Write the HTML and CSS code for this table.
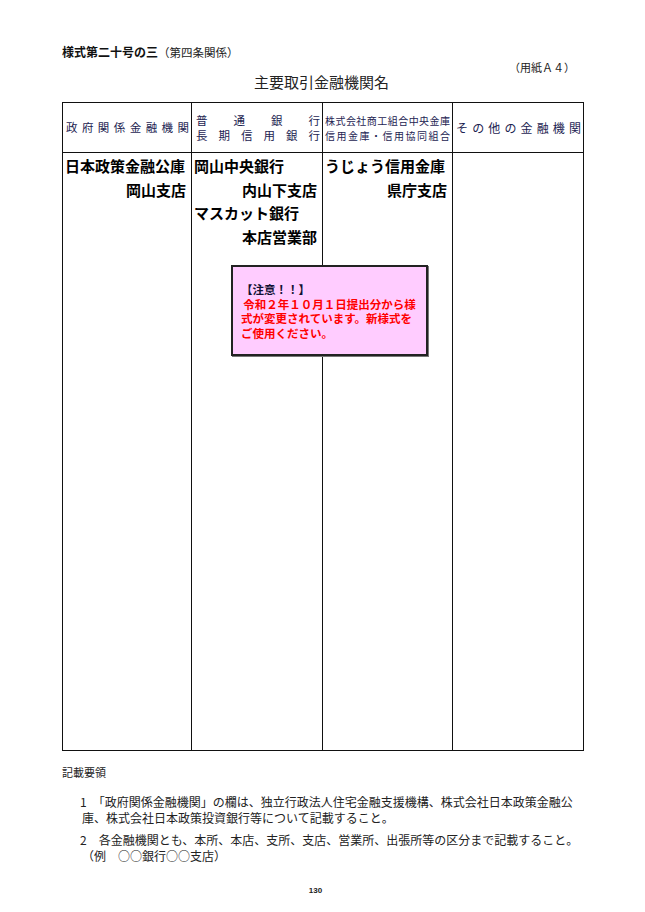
FILE: index.html
```html
<!DOCTYPE html>
<html lang="ja">
<head>
<meta charset="utf-8">
<title>主要取引金融機関名</title>
<link rel="stylesheet" href="styles.css">
</head>
<body>
<div class="page">
  <div class="form-no"><b>様式第二十号の三</b><span class="rel">（第四条関係）</span></div>
  <div class="paper">（用紙Ａ４）</div>
  <h1 class="title">主要取引金融機関名</h1>

  <div class="table-wrap">
    <table class="grid">
      <colgroup>
        <col class="c1"><col class="c2"><col class="c3"><col class="c4">
      </colgroup>
      <thead>
        <tr class="head">
          <th><div class="dist h1">政府関係金融機関</div></th>
          <th><div class="dist h2">普通銀行</div><div class="dist h2">長期信用銀行</div></th>
          <th><div class="dist h3">株式会社商工組合中央金庫</div><div class="dist h3">信用金庫・信用協同組合</div></th>
          <th><div class="dist h4">その他の金融機関</div></th>
        </tr>
      </thead>
      <tbody>
        <tr class="body">
          <td><div>日本政策金融公庫</div><div class="r">岡山支店</div></td>
          <td><div>岡山中央銀行</div><div class="r">内山下支店</div><div>マスカット銀行</div><div class="r">本店営業部</div></td>
          <td><div>うじょう信用金庫</div><div class="r">県庁支店</div></td>
          <td></td>
        </tr>
      </tbody>
    </table>
    <div class="notice">
      <div class="notice-head">【注意！！】</div>
      <div class="notice-text">&#x2009;令和２年１０月１日提出分から様<br>式が変更されています。新様式を<br>ご使用ください。</div>
    </div>
  </div>

  <div class="notes">
    <div class="notes-title">記載要領</div>
    <p class="item">1　「政府関係金融機関」の欄は、独立行政法人住宅金融支援機構、株式会社日本政策金融公庫、株式会社日本政策投資銀行等について記載すること。</p>
    <p class="item">2　各金融機関とも、本所、本店、支所、支店、営業所、出張所等の区分まで記載すること。<br>（例　○○銀行○○支店）</p>
  </div>

  <div class="pageno">130</div>
</div>
</body>
</html>
```

FILE: styles.css
```css
html, body {
  margin: 0;
  padding: 0;
  background: #fff;
}
body {
  font-family: "Noto Sans CJK JP", "Noto Sans", sans-serif;
  color: #111;
}
.page {
  width: 645px;
  padding: 44px 0 0 62px;
  box-sizing: border-box;
}
.form-no {
  font-size: 12px;
  line-height: 16px;
  height: 16px;
}
.form-no b {
  font-weight: 700;
}
.form-no .rel {
  font-size: 11.5px;
  font-weight: 400;
  color: #222;
}
.paper {
  font-size: 11px;
  line-height: 14px;
  margin: 0 0 0 447px;
  color: #222;
}
.title {
  margin: -2px 0 0 192px;
  font-size: 15px;
  line-height: 20px;
  font-weight: 400;
  color: #222;
}
.table-wrap {
  position: relative;
  width: 521px;
  margin-top: 10px;
}
.grid {
  width: 521px;
  table-layout: fixed;
  border-collapse: collapse;
}
.grid col.c1 { width: 129px; }
.grid col.c2 { width: 131px; }
.grid col.c3 { width: 130px; }
.grid col.c4 { width: 131px; }
.grid th, .grid td {
  border: 1px solid #111;
  padding: 0;
}
.head th {
  height: 49px;
  font-weight: 400;
  color: #1d2452;
  vertical-align: middle;
}
.dist {
  text-align: justify;
  text-align-last: justify;
  white-space: nowrap;
}
.h1 { font-size: 11.5px; line-height: 15px; padding: 0 2px 0 3px; }
.h2 { font-size: 11.5px; line-height: 15px; padding: 0 2px 0 4px; }
.h3 { font-size: 10px; line-height: 15px; padding: 0 2px 0 2px; }
.h4 { font-size: 12px; line-height: 15px; padding: 0 2px 0 3px; }
.body td {
  height: 596px;
  vertical-align: top;
  font-size: 15px;
  line-height: 23.6px;
  font-weight: 700;
  color: #000;
  padding: 1px 5px 0 2px;
}
.body td .r {
  text-align: right;
}
.notice {
  position: absolute;
  left: 169px;
  top: 163px;
  width: 197px;
  height: 91px;
  background: #ffccff;
  border: 2px solid #222;
  box-shadow: 1px 1px 0 #777;
  padding: 15px 0 0 8px;
  box-sizing: border-box;
  font-size: 11.5px;
  line-height: 14.7px;
  font-weight: 700;
}
.notice-head {
  color: #111133;
}
.notice-text {
  color: #ff0000;
  white-space: nowrap;
}
.notes {
  margin-top: 13px;
  width: 521px;
  color: #222;
}
.notes-title {
  font-size: 11px;
  line-height: 16px;
  margin-bottom: 14px;
}
.item {
  margin: 0 0 6px 0;
  padding-left: 20px;
  text-indent: -2px;
  font-size: 12px;
  line-height: 16px;
}
.pageno {
  margin-top: 22px;
  width: 521px;
  padding-right: 14px;
  box-sizing: border-box;
  text-align: center;
  font-family: "Liberation Sans", Arial, sans-serif;
  font-size: 8px;
  font-weight: 700;
  line-height: 10px;
  color: #222;
}
```
